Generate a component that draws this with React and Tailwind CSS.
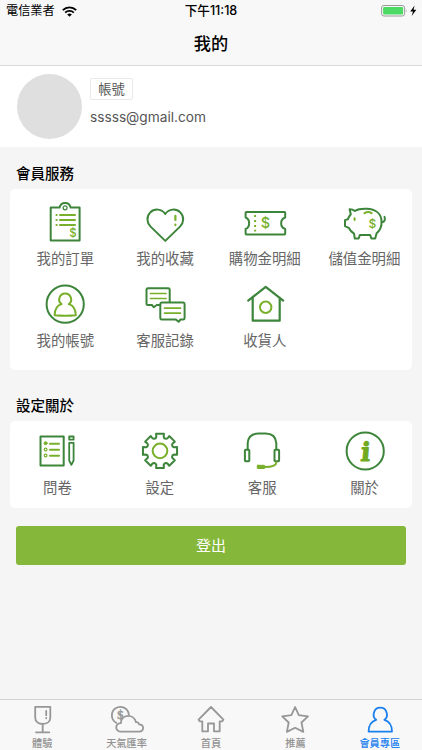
import React from 'react';

const G = '#3d853b';
const L = '#78b02b';

function Icon({ children, width = 40, height = 40, stroke = G, sw = 2 }) {
  return (
    <svg
      width={width}
      height={height}
      viewBox={`0 0 ${width} ${height}`}
      className="block overflow-visible"
      fill="none"
      stroke={stroke}
      strokeWidth={sw}
      strokeLinecap="round"
      strokeLinejoin="round"
    >
      {children}
    </svg>
  );
}

function Dollar({ x, y, size, color = L, className = 'font-["Inter",sans-serif] font-medium' }) {
  return (
    <text x={x} y={y} fontSize={size} fill={color} stroke="none" textAnchor="middle" className={className}>
      $
    </text>
  );
}

const OrderIcon = () => (
  <Icon>
    <path d="M14.6 5.6H5.7V38.4H34.6V5.6H25.6C25.2 2.6 23 .9 20.1.9S15 2.6 14.6 5.6Z" />
    <circle cx="20.1" cy="5.8" r="2" strokeWidth="1.2" />
    <path d="M11.4 13h.3M11.4 18h.3M11.4 23h.3M15 13h15M15 18h15M15 23h15" stroke={L} />
    <Dollar x={28} y={35.2} size={11.5} />
  </Icon>
);

const HeartIcon = () => (
  <Icon>
    <path d="M20.3 38.9 5.6 24.600C1.700 20.800 1.300 14.600 5.100 10.600 9.500 6.100 16.900 6.700 20.300 12 23.700 6.700 31.100 6.100 35.500 10.600 39.300 14.600 38.900 20.800 35 24.600Z" />
    <path d="M30.400 13.900v4M30.400 22.700v.4" stroke={L} strokeWidth="2.200" />
  </Icon>
);

const TicketIcon = () => (
  <Icon>
    <path d="M1.500 9.900H39.500Q40.200 9.900 40.200 10.600V15.500C34.800 17.200 34.800 25.200 40.200 27V31.700Q40.200 32.500 39.500 32.500H1.500Q.600 32.500.600 31.700V27C5.300 25.200 5.300 17.200.600 15.500V10.600Q.600 9.900 1.500 9.900Z" />
    <path d="M10.100 12.900v2.200M10.100 17.900v2.200M10.100 22.900v2.200M10.100 27.700v1.800" stroke={L} strokeLinecap="butt" />
    <Dollar x={20.500} y={26.200} size={14.500} />
  </Icon>
);

const PigIcon = () => (
  <Icon>
    <path d="M10.800 9C9.200 7.500 7.500 7.300 5.600 7.300L6.800 12.200C5.300 13.800 4.600 15.300 3.900 17.200L1 18.100V24.200L4.700 25.800C6 28.500 7.600 30.100 10 31.700L10.800 36.500H14.600L15.800 33.100H26.200L27.400 36.500H31.200L32.600 31.300C36 28.600 37.600 25.500 37.600 20.300 37.600 11.500 31.200 7.100 22.600 6.800 18 6.600 13.800 7.200 10.800 9Z" />
    <path d="M37.700 20C40.200 20.300 41.600 17.800 40.500 14.900" />
    <path d="M10.600 16.200v1.900M20.500 11.200C22.700 9.900 25.600 9.900 27.600 11.200" stroke={L} />
    <Dollar x={28.300} y={26.200} size={12} />
  </Icon>
);

const AccountIcon = () => (
  <Icon>
    <circle cx="20.200" cy="20.200" r="18.600" />
    <path d="M16.600 20.100C14.200 18.500 13.900 15.700 14.500 13.700 15.300 11 17.500 9.400 20.200 9.400S25.100 11 25.900 13.700C26.500 15.700 26.200 18.500 23.800 20.100 28.500 21.500 30.800 25.700 30.800 31.300Q20.200 32.300 9.600 31.300C9.600 25.700 11.900 21.500 16.600 20.100Z" stroke={L} />
  </Icon>
);

const ChatIcon = () => (
  <Icon>
    <path d="M15.300 21H11.800L8.700 23.200 6.900 21H3Q1.500 21 1.500 19.500V5.700Q1.500 4.300 3 4.300H23.200Q24.700 4.300 24.700 5.700V18" />
    <path d="M16.700 18.500H38.200Q39.600 18.500 39.600 20V33.900Q39.600 35.400 38.200 35.400H35.500L33.700 37.800 30.600 35.400H16.700Q15.300 35.400 15.300 33.900V20Q15.300 18.500 16.700 18.500Z" />
    <path d="M5.500 9.500h15.500M5.500 14.500h15.500M19.500 24.200h16M19.500 29.200h16" stroke={L} strokeWidth="1.700" />
  </Icon>
);

const HouseIcon = () => (
  <Icon sw={2.200}>
    <path d="M3.200 16.600 20.700 2.900 38.200 16.600M7.700 13.500V36.700H34.700V13.500" />
    <circle cx="20.700" cy="23.300" r="5.700" stroke={L} strokeWidth="2" />
  </Icon>
);

const SurveyIcon = () => (
  <Icon>
    <rect x="3.500" y="5.500" width="23.200" height="29" />
    <circle cx="8.600" cy="12.200" r="1.500" fill={L} stroke={L} strokeWidth="1" />
    <circle cx="8.600" cy="18.500" r="1.400" stroke={L} strokeWidth="1.200" />
    <circle cx="8.600" cy="24.500" r="1.400" stroke={L} strokeWidth="1.200" />
    <path d="M13 12.700h9M13 18.800h9M13 24.700h9" stroke={L} />
    <rect x="32.200" y="5.500" width="4.400" height="3.200" strokeWidth="1.800" />
    <path d="M32.200 11.800H36.600V29.500L34.400 33.800 32.200 29.500Z" strokeWidth="1.800" />
  </Icon>
);

// Outline of an eight-toothed gear centred in the icon box.
const gearPoints = Array.from({ length: 8 }, (_, i) => {
  const base = i * 45 - 90;
  return [[-19, 13.400], [-14.500, 14.600], [-13, 17.500], [13, 17.500], [14.500, 14.600], [19, 13.400]]
    .map(([a, r]) => {
      const t = ((base + a) * Math.PI) / 180;
      return `${(20 + r * Math.cos(t)).toFixed(2)},${(19.900 + r * Math.sin(t)).toFixed(2)}`;
    })
    .join(' ');
}).join(' ');

const GearIcon = () => (
  <Icon>
    <polygon points={gearPoints} />
    <circle cx="20" cy="19.900" r="7.300" stroke={L} />
  </Icon>
);

const HeadsetIcon = () => (
  <Icon>
    <rect x="2.900" y="18.700" width="4.400" height="11.500" rx=".8" />
    <rect x="32.500" y="18.700" width="4.600" height="11.500" rx=".8" />
    <path d="M5.700 18.200V12C6.200 5.500 10 2.500 16.500 2.500H23.500C30 2.500 33.800 5.500 34.300 12V18.200" />
    <path d="M34.300 31.200C34.300 34.700 30 36 23 36" stroke={L} />
    <rect x="15.300" y="34.300" width="7.400" height="3.200" rx=".4" fill={L} stroke={L} strokeWidth="1" />
  </Icon>
);

const InfoIcon = () => (
  <Icon>
    <circle cx="20.200" cy="20" r="18.600" />
    <text
      x="22.600"
      y="29.700"
      fontSize="26"
      fill="#70aa22"
      stroke="#70aa22"
      strokeWidth="0.900"
      textAnchor="middle"
      transform="skewX(-5)"
      className='font-["DejaVu_Serif",serif] font-bold'
    >
      i
    </text>
  </Icon>
);

const TAB = '#979797';

const tabs = [
  {
    label: '體驗',
    icon: (
      <>
        <path d="M10.200 1.800H25.300V12.500C25.300 16.800 21.800 19 17.700 19S10.200 16.800 10.200 12.500ZM17.700 19V27.300M11 27.300H24.300" />
        <path d="M21.200 6v4.200M21.200 12.800v.5" strokeWidth="1.800" />
      </>
    ),
  },
  {
    label: '天氣匯率',
    icon: (
      <>
        <path d="M6.200 17.800A8.500 8.500 0 1 1 18.800 9.300" />
        <text x={10.300} y={14.200} fontSize={12.500} fill={TAB} stroke={TAB} strokeWidth="0.400" textAnchor="middle" className='font-["Liberation_Serif",serif] font-bold'>
          $
        </text>
        <path d="M10.500 26.600C4.800 26.600 4.800 18 10.800 18.200 11.400 8.900 24 8.500 26 17.200 27.300 16.800 28.700 17.500 29 19.400 34.600 19.600 34.300 26.600 29 26.600Z" />
      </>
    ),
  },
  {
    label: '首頁',
    icon: <path d="M17 2 29.400 14.700 28.300 16.300H25.700V26.300H20V18.500H14V26.300H8.300V16.300H5.700L4.600 14.700Z" />,
  },
  {
    label: '推薦',
    icon: <path d="M17.100 2 20.800 10.100 30 11.300 23.500 17.500 25.300 26.900 17.100 22.800 8.900 26.900 10.700 17.500 4.200 11.300 13.400 10.100Z" />,
  },
  {
    label: '會員專區',
    active: true,
    icon: (
      <path d="M13.200 14.800C10.600 13 10.200 10 11 7.400 11.900 4.400 14.300 2.700 17.300 2.700S22.700 4.400 23.600 7.400C24.400 10 24 13 21.400 14.800 26.500 16.300 29 20.500 29 26.600H5.600C5.600 20.500 8.100 16.300 13.200 14.800Z" />
    ),
  },
];

const services = [
  ['我的訂單', OrderIcon],
  ['我的收藏', HeartIcon],
  ['購物金明細', TicketIcon],
  ['儲值金明細', PigIcon],
  ['我的帳號', AccountIcon],
  ['客服記錄', ChatIcon],
  ['收貨人', HouseIcon],
];

const settings = [
  ['問卷', SurveyIcon],
  ['設定', GearIcon],
  ['客服', HeadsetIcon],
  ['關於', InfoIcon],
];

function Item({ label, Glyph }) {
  return (
    <div className="flex flex-col items-center">
      <Glyph />
      <span className="mt-[7px] whitespace-nowrap text-[14.4px] leading-5 text-[#666]">{label}</span>
    </div>
  );
}

export default function App() {
  return (
    <div className='flex h-[750px] w-[422px] flex-col overflow-hidden bg-[#f5f5f5] font-["Inter","Noto_Sans_CJK_TC",sans-serif] text-black'>
      <header className="h-[66px] shrink-0 border-b border-[#d9d9d9] bg-[#f8f8f8]">
        <div className="grid h-[23px] grid-cols-[1fr_auto_1fr] items-center pl-[6px] pr-[6px] text-[12.2px] leading-none">
          <div className="flex items-center gap-[7px]">
            <span>電信業者</span>
            <svg width="15" height="11" viewBox="0 0 15 11" fill="none" stroke="#000" strokeWidth="1.900">
              <path d="M.8 4.100C4.600.400 10.400.400 14.200 4.100M3.200 6.600C5.600 4.300 9.400 4.300 11.800 6.600" />
              <path d="M5.200 8.400C6.500 7.200 8.500 7.200 9.800 8.400L7.500 10.700Z" fill="#000" stroke="none" />
            </svg>
          </div>
          <span className="text-[12.600px] font-medium">下午11:18</span>
          <div className="flex items-center justify-end">
            <svg width="35" height="13" viewBox="0 0 35 13" className="-mt-[2px] overflow-visible">
              <rect x=".6" y="1.500" width="23" height="10.500" rx="2.300" fill="none" stroke="#999" />
              <rect x="2.100" y="3" width="20" height="7.500" rx="1" fill="#4cd964" />
              <path d="M24.900 5.200Q26.300 6.700 24.900 8.300Z" fill="#999" />
              <path d="M33.600 1.500 29.200 7.500H32L30.700 12 35.300 5.700H32.500Z" fill="#000" />
            </svg>
          </div>
        </div>
        <h1 className="text-center text-[17.200px] font-medium leading-[41px]">我的</h1>
      </header>

      <section className="flex h-[81px] shrink-0 gap-2 bg-white pl-[17px] pt-2">
        <div className="size-[65px] rounded-full bg-[#dfdfdf]" />
        <div className="flex flex-col items-start pt-1 text-[#555]">
          <span className="flex h-[22px] w-[43px] items-center justify-center rounded-[2px] border border-[#e9e9e9] pt-px text-[13.300px] leading-none">
            帳號
          </span>
          <span className="mt-[7px] text-[13.700px] leading-5">sssss@gmail.com</span>
        </div>
      </section>

      <main className="flex-1">
        <h2 className="mt-[16px] pl-[16px] text-[14.500px] font-medium leading-[22px]">會員服務</h2>
        <section className="mx-[10px] mt-[4px] grid h-[181px] grid-cols-[repeat(4,99.700px)] content-start gap-y-[15px] rounded-[5px] bg-white pl-[5.500px] pt-[13px]">
          {services.map(([label, Glyph]) => (
            <Item key={label} label={label} Glyph={Glyph} />
          ))}
        </section>

        <h2 className="mt-[25px] pl-[16px] text-[14.500px] font-medium leading-[22px]">設定關於</h2>
        <section className="mx-[10px] mt-[4px] grid h-[87px] grid-cols-[repeat(4,102.400px)] content-start justify-center rounded-[5px] bg-white pt-[10px]">
          {settings.map(([label, Glyph]) => (
            <Item key={label} label={label} Glyph={Glyph} />
          ))}
        </section>

        <button className="mx-[16px] mt-[17.500px] flex h-[39px] w-[390px] items-center justify-center rounded-[3px] bg-[#85b83a] pt-[2px] text-[15px] text-white">
          登出
        </button>
      </main>

      <nav className="grid h-[51px] shrink-0 grid-cols-5 border-t border-[#d2d2d2] bg-[#f8f8f8] pt-[5px]">
        {tabs.map(({ label, icon, active }) => (
          <div key={label} className={`flex flex-col items-center ${active ? 'text-[#1a80ee]' : 'text-[#929292]'}`}>
            <Icon width={34} height={28} stroke={active ? '#1a80ee' : TAB} sw={1.800}>
              {icon}
            </Icon>
            <span className="mt-[4px] text-[10.200px] font-medium leading-3">{label}</span>
          </div>
        ))}
      </nav>
    </div>
  );
}
